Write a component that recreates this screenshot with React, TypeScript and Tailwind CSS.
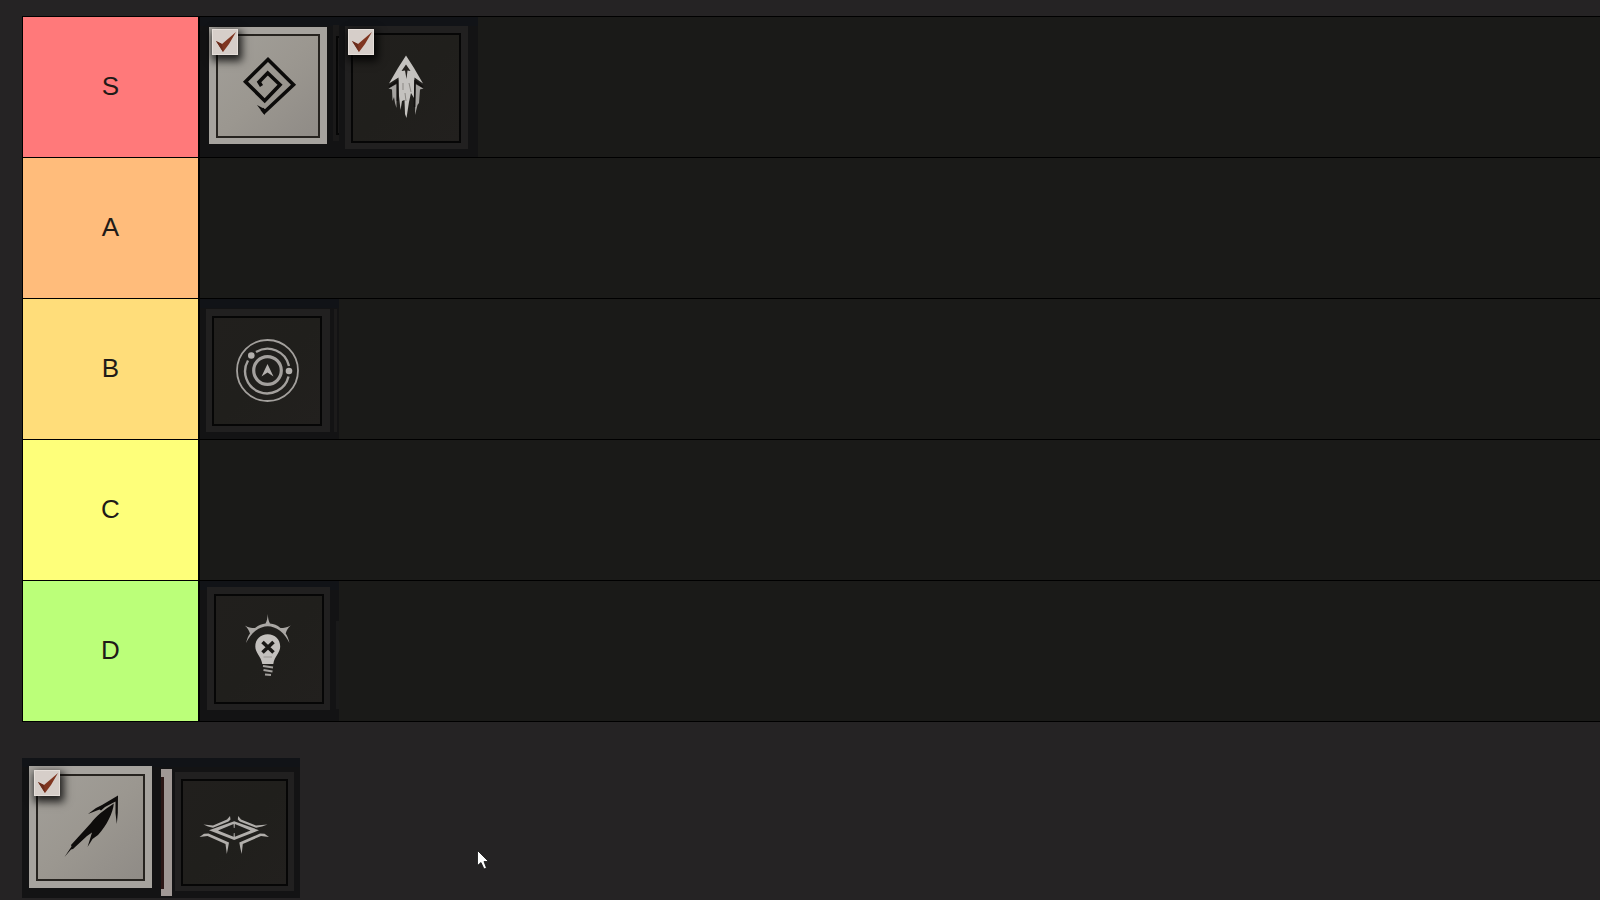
import React from 'react';
import { clsx } from 'clsx';

interface TileProps {
  name: string;
  light?: boolean;
  checkable?: boolean;
  frame: [number, number, number, number];
  inner: [number, number, number, number];
  edge?: React.ReactNode;
  children: React.ReactNode;
}

const Tile: React.FC<TileProps> = ({ name, light, checkable, frame, inner, edge, children }) => (
  <div className="relative h-[140px] w-[139px] shrink-0">
    <svg viewBox="0 0 139 140" className="block h-full w-full" role="img" aria-label={name}>
      <defs>
        <linearGradient id={`${name}-card`} x1="0" y1="0" x2="1" y2="1">
          <stop offset="0" stopColor={light ? '#a29f99' : '#211f1d'} />
          <stop offset="0.5" stopColor={light ? '#9b9790' : '#201f1c'} />
          <stop offset="1" stopColor={light ? '#8f8b86' : '#22201e'} />
        </linearGradient>
      </defs>
      <rect width="139" height="140" fill="#131314" />
      <rect width="139" height="9" fill="#111317" />
      {edge}
      <rect
        x={frame[0]}
        y={frame[1]}
        width={frame[2] - frame[0]}
        height={frame[3] - frame[1]}
        fill={light ? '#a6a39e' : '#212020'}
      />
      <rect
        x={inner[0]}
        y={inner[1]}
        width={inner[2] - inner[0]}
        height={inner[3] - inner[1]}
        fill={`url(#${name}-card)`}
        stroke={light ? '#26231f' : '#060606'}
        strokeWidth="2"
      />
      {children}
    </svg>
    {checkable && <TileCheck name={name} light={light} />}
  </div>
);

const TileCheck: React.FC<{ name: string; light?: boolean }> = ({ name, light }) => (
  <label className={clsx('absolute block h-[26px] w-[26px]', light ? 'left-3 top-3' : 'left-[9px] top-3')}>
    <input
      type="checkbox"
      defaultChecked
      aria-label={name}
      className="peer block h-full w-full appearance-none border border-[#e6dfda] bg-[#d6cec9] shadow-[2px_4px_8px_2px_rgba(0,0,0,0.8)]"
    />
    <svg
      viewBox="0 0 26 26"
      className="pointer-events-none absolute inset-0 hidden h-full w-full peer-checked:block"
      aria-hidden="true"
    >
      <path d="M4 12 L10 15 L24 3 L17 15 L11 23 Z" fill="#7f3520" />
      <path d="M4 12 L10 15 L11 23 Z" fill="#6a2c1b" />
    </svg>
  </label>
);

const Spiral = () => (
  <g>
    <path
      d="M62 92 L64.5 95 L93.5 67.8 L68 42.5 L45.5 64.7 L64.7 83.7 L80 67.7 L67.7 56 L59 65 L61.5 69"
      fill="none"
      stroke="#0c0b0a"
      strokeWidth="3.6"
    />
    <path d="M57 88 L65.5 92.5 L64.5 98 Z" fill="#0c0b0a" />
  </g>
);

const TripleArrow = () => (
  <g>
    <path
      d="M67 38.5 L75 51 L84 66.5 L75.5 60.5 L75 81 L72 76 L70 85 L67.5 101 L66 97 L65.5 83 L63 84 L61.5 93 L60 79 L59.5 60.5 L50 66.5 L59 51 Z"
      fill="#c4c2bf"
    />
    <path d="M49.5 71.5 L57.5 67 L57.5 91 L56 86 L55 80 L53.5 84 L53 72.5 Z" fill="#a3a19e" />
    <path d="M84.5 71.5 L76.5 67 L76 98 L78.5 88 L80 86 L81 72.5 Z" fill="#a3a19e" />
    <path d="M67 47.5 L71.5 54 L68.5 53.5 L67.5 62 L66 53.5 L62.5 54 Z" fill="#24211e" />
    <path d="M50 70 L58.5 64 L58.5 84 M84 70 L76 64 L75.5 90" stroke="#12100f" strokeWidth="1.6" fill="none" />
    <path d="M64 66 L64 73 M70 66 L72 75 M66 76 L67 84" stroke="#8a8783" strokeWidth="1" />
  </g>
);

const Orbit = () => (
  <g fill="none" stroke="#a3a09d">
    <circle cx="67.5" cy="71.5" r="30.5" strokeWidth="1.8" />
    <path d="M56 53 A22 22 0 0 1 89 67" strokeWidth="2.4" />
    <path d="M88.5 77.5 A22 22 0 1 1 48 61.5" strokeWidth="2.4" />
    <circle cx="67.5" cy="71.5" r="13.8" strokeWidth="3.2" />
    <circle cx="51.3" cy="56.5" r="3.3" fill="#b3b0ad" stroke="none" />
    <circle cx="89" cy="72" r="3.3" fill="#b3b0ad" stroke="none" />
    <path d="M67.5 65 L73.5 77.5 L67.5 73.5 L61.5 77.5 Z" fill="#b3b0ad" stroke="none" />
  </g>
);

const Bulb = () => (
  <g transform="translate(0 1)">
    <path
      d="M46 61 C47 57 48 54 50 51.5 C49 48 47.5 46 44.8 43.5 C48 45.5 51 46 55 46 C59 43 62 42 65.5 41.5 C67 39 67.5 36 67.7 32 C68 36 68.5 39 70 41.5 C74 42 77 43 80.5 46 C84 46 87 45.5 90.8 43.5 C88 46 86.5 48 85.7 51.5 C87.5 54 88.5 57 89.5 61 C87 56 84 52 80 48.8 C72 42.8 63.5 42.8 55.5 48.8 C51.5 52 48.5 56 46 61 Z"
      fill="#aaa7a4"
    />
    <path
      d="M67.7 52.3 C60.5 52.3 55.3 57.5 55.3 64.5 C55.3 71 61 74 62.3 82 H73.3 C74.5 74 80.2 71 80.2 64.5 C80.2 57.5 75 52.3 67.7 52.3 Z"
      fill="#c3c0bd"
    />
    <path d="M62.5 60 L73.5 70.5 M73.5 60 L62.5 70.5" stroke="#1a1816" strokeWidth="3.6" />
    <path d="M63 84 L73 85.5 M63.5 88 L72.5 89.5 M65 92.5 L71 93" stroke="#a3a09d" strokeWidth="2.2" />
    <path d="M63.5 75 H72" stroke="#979491" strokeWidth="1" />
  </g>
);

const Dart = () => (
  <g fill="#0e0c0b">
    <path d="M96 37.5 L95.8 55 L94.8 66 L93.5 55 L93.5 43.5 L83 49 L79 52.5 L77.5 51.5 L66 56 L74 50 L80 47 Z" />
    <path d="M91.8 45.5 C91 55 85 67 76 77 L70.5 81 L65.5 89 L68.5 79.5 L70 74.5 L65 78 L51 91 L49 91.5 L42.5 99 L49.5 88.5 L49 87 L69 65 C74 58 82 52 91.8 45.5 Z" />
  </g>
);

const Eye = () => (
  <g fill="#b1aeab">
    <path
      d="M48 72.2 L73.2 63.2 L98 72.2 L73.2 82 Z M57 72.4 L73.2 79 L89.5 72.4 L73.2 65.8 Z"
      fillRule="evenodd"
    />
    <path d="M72.4 64 H74 L73.6 70 H72.8 Z M72.8 75 H73.6 L74 81 H72.4 Z" />
    <path d="M42.5 66.5 L52 67.4 L66 61.6 L69 58 L69.5 61.5 L67.5 63.6 L52 69.8 L47 68.6 Z" />
    <path d="M106.5 66.5 L95 67.4 L80 61.6 L77.2 58 L76.8 61.5 L78.8 63.6 L95 69.8 L101 68.6 Z" />
    <path d="M38.5 79 L43 75.8 L47.5 75.6 L68 84.6 L67 90 L65.8 96 L64.5 86 L46.5 78 Z" />
    <path d="M108 79 L103.5 75.8 L99 75.6 L78.3 84.6 L79.3 90 L80.7 96 L81.8 86 L100 78 Z" />
  </g>
);

const tiers = [
  {
    label: 'S',
    color: 'bg-[#ff797a]',
    tiles: (
      <>
        <Tile
          name="spiral"
          light
          checkable
          frame={[9, 10, 127, 127]}
          inner={[17, 18, 119, 120]}
          edge={
            <>
              <rect x="133" y="8" width="6" height="116" fill="#1a1919" />
              <path d="M139 20 H137 V117 H139" fill="none" stroke="#060606" strokeWidth="2" />
            </>
          }
        >
          <Spiral />
        </Tile>
        <Tile name="arrows" checkable frame={[6, 9, 129, 132]} inner={[13, 17, 121, 125]}>
          <TripleArrow />
        </Tile>
      </>
    )
  },
  { label: 'A', color: 'bg-[#ffbc7b]', tiles: null },
  {
    label: 'B',
    color: 'bg-[#ffdd7a]',
    tiles: (
      <Tile
        name="orbit"
        frame={[6, 10, 130, 133]}
        inner={[13, 18, 121, 126]}
        edge={<rect x="134" y="10" width="3" height="123" fill="#1c1b1b" />}
      >
        <Orbit />
      </Tile>
    )
  },
  { label: 'C', color: 'bg-[#feff7a]', tiles: null },
  {
    label: 'D',
    color: 'bg-[#bbff79]',
    tiles: (
      <Tile
        name="bulb"
        frame={[7, 6, 130, 129]}
        inner={[15, 14, 123, 122]}
        edge={<rect x="136" y="40" width="3" height="88" fill="#1a1a1a" />}
      >
        <Bulb />
      </Tile>
    )
  }
];

export default function App() {
  return (
    <main className="relative min-h-screen overflow-hidden bg-[#252324] pl-[22px] pt-4 font-['Liberation_Sans',Arial,sans-serif]">
      <section className="border-l border-t border-black">
        {tiers.map((tier) => (
          <div key={tier.label} className="flex min-h-[141px] border-b border-black bg-[#1a1a18]">
            <h2
              className={clsx(
                'flex w-[177px] shrink-0 items-center justify-center border-r-2 border-black pb-0.5 text-[26px] leading-8 text-[#1f1b18]',
                tier.color
              )}
            >
              {tier.label}
            </h2>
            <div className="flex flex-1 flex-wrap">{tier.tiles}</div>
          </div>
        ))}
      </section>

      <section className="mt-9 flex flex-wrap">
        <Tile name="dart" light checkable frame={[7, 8, 130, 130]} inner={[15, 17, 122, 122]}>
          <Dart />
        </Tile>
        <Tile
          name="eye"
          frame={[14, 14, 133, 133]}
          inner={[21, 22, 126, 127]}
          edge={
            <>
              <rect x="0" y="11" width="11" height="127" fill="#a09895" />
              <rect x="0" y="19" width="3" height="112" fill="#2b1716" />
            </>
          }
        >
          <Eye />
        </Tile>
      </section>

      <svg
        viewBox="0 0 12 20"
        className="pointer-events-none absolute left-[477px] top-[850px] h-5 w-3"
        aria-hidden="true"
      >
        <path
          d="M0.5 0.5 V15.5 L4 12.5 L7 19 L9.5 18 L7 11.5 H11.5 Z"
          fill="#ffffff"
          stroke="#111111"
          strokeWidth="0.8"
        />
      </svg>
    </main>
  );
}
